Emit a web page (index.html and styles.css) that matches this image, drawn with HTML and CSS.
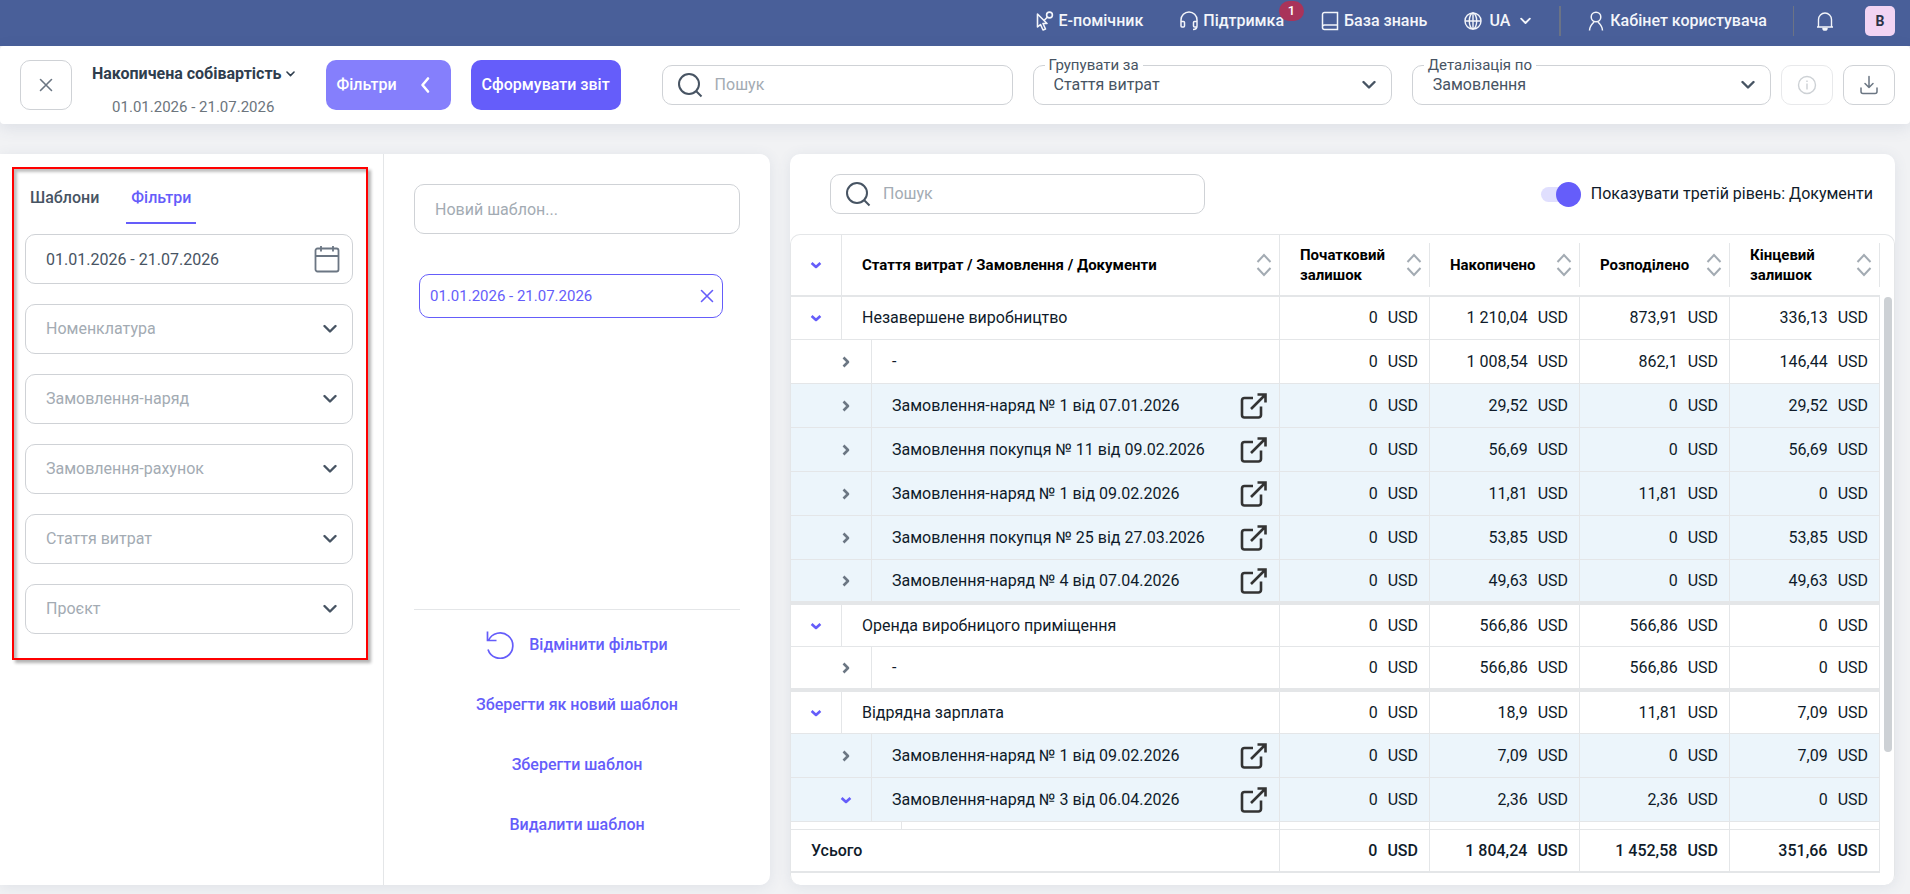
FILE: index.html
```html
<!DOCTYPE html>
<html lang="uk">
<head>
  <meta charset="UTF-8" />
  <meta name="viewport" content="width=device-width, initial-scale=1.0" />
  <title>Накопичена собівартість</title>
  <link rel="stylesheet" href="styles.css">
</head>
<body>
  <svg class="sprite" aria-hidden="true">
    <symbol id="chevron" viewBox="0 0 14 9"><path d="M1.5 1.5 7 7l5.500-5.500" fill="none" stroke="currentColor" stroke-width="2.400" stroke-linecap="round" stroke-linejoin="round"/></symbol>
    <symbol id="down" viewBox="0 0 12 12"><path d="M1.600 4 6 8l4.400-4" fill="none" stroke="currentColor" stroke-width="2.600" stroke-linejoin="round"/></symbol>
    <symbol id="right" viewBox="0 0 12 12"><path d="M3.500 1.500 8 6l-4.500 4.500" fill="none" stroke="currentColor" stroke-width="2.600" stroke-linejoin="round"/></symbol>
    <symbol id="close" viewBox="0 0 14 14"><path d="M1.500 1.500l11 11M12.500 1.500l-11 11" fill="none" stroke="currentColor" stroke-width="1.600" stroke-linecap="round"/></symbol>
    <symbol id="sort" viewBox="0 0 16 24"><path d="M1.500 9 8 2l6.500 7M1.500 15 8 22l6.500-7" fill="none" stroke="currentColor" stroke-width="2"/></symbol>
    <symbol id="search" viewBox="0 0 26 26"><circle cx="12" cy="12" r="10" fill="none" stroke="currentColor" stroke-width="2"/><path d="M19 19l5.500 5.500" stroke="currentColor" stroke-width="2"/></symbol>
    <symbol id="open" viewBox="0 0 28 28"><path d="M13 6H4.500A2.500 2.500 0 0 0 2 8.500v14.500A2.500 2.500 0 0 0 4.500 25.500h14A2.500 2.500 0 0 0 21 23v-8.500M17.500 2.500h8v8M25 3 11 17" fill="none" stroke="currentColor" stroke-width="2.600"/></symbol>
  </svg>

  <header class="topbar">
    <a href="#" class="top-link">
      <svg width="20" height="20" viewBox="0 0 20 20" fill="none" stroke="currentColor" stroke-width="1.600" stroke-linejoin="round"><path d="M2.500 3v13l3-2.500 2.500 5.500 2.500-1-2.500-5.500h4z"/><circle cx="14.500" cy="4" r="2.900"/><path d="M9 9.500 12.500 6"/></svg>
      Е-помічник
    </a>
    <a href="#" class="top-link">
      <svg width="20" height="20" viewBox="0 0 20 20" fill="none" stroke="currentColor" stroke-width="1.500"><path d="M2 15V9a8 8 0 0 1 16 0v6c0 2.500-1.500 3.500-4 3.500M2 10.500h2.500a1 1 0 0 1 1 1V15a1 1 0 0 1-1 1H3a1 1 0 0 1-1-1M18 10.500h-2.500a1 1 0 0 0-1 1V15a1 1 0 0 0 1 1H18"/></svg>
      Підтримка
      <span class="badge">1</span>
    </a>
    <a href="#" class="top-link">
      <svg width="20" height="20" viewBox="0 0 20 20" fill="none" stroke="currentColor" stroke-width="1.500"><path d="M2.500 17V3.500a2 2 0 0 1 2-2h13V14h-13a2 2 0 0 0-2 2.500 2 2 0 0 0 2 2h13V14"/></svg>
      База знань
    </a>
    <button class="top-link lang">
      <svg width="20" height="20" viewBox="0 0 20 20" fill="none" stroke="currentColor" stroke-width="1.400"><circle cx="10" cy="10" r="8"/><ellipse cx="10" cy="10" rx="3.700" ry="8"/><path d="M10 2v16M2 10h16"/></svg>
      UA
      <svg class="lang-arrow" width="11" height="8"><use href="#chevron"/></svg>
    </button>
    <div class="top-divider wide"></div>
    <a href="#" class="top-link">
      <svg width="20" height="20" viewBox="0 0 20 20" fill="none" stroke="currentColor" stroke-width="1.500"><circle cx="10" cy="6" r="4.800"/><path d="M3.500 19.500c0-4 2.500-6.500 4.500-8.500M16.500 19.500c0-4-2.500-6.500-4.500-8.500"/></svg>
      Кабінет користувача
    </a>
    <div class="top-divider"></div>
    <button class="bell" aria-label="Сповіщення">
      <svg width="20" height="20" viewBox="0 0 20 20" fill="none" stroke="currentColor" stroke-width="1.400"><path d="M2 16h16M3.500 16V8.500a6.500 6.500 0 0 1 13 0V16"/><path d="M8 17.500a2 1.600 0 0 0 4 0z" fill="currentColor"/></svg>
    </button>
    <button class="avatar">В</button>
  </header>

  <div class="toolbar">
    <button class="icon-btn tall" aria-label="Закрити"><svg width="14" height="14"><use href="#close"/></svg></button>
    <div class="report-title">
      <button class="report-name">Накопичена собівартість <svg width="9" height="6"><use href="#chevron"/></svg></button>
      <span class="report-date">01.01.2026 - 21.07.2026</span>
    </div>
    <button class="btn btn-light">Фільтри
      <svg width="10" height="18" viewBox="0 0 10 18"><path d="M8 2.500 2.500 9 8 15.500" fill="none" stroke="currentColor" stroke-width="2.600" stroke-linecap="round" stroke-linejoin="round"/></svg>
    </button>
    <button class="btn">Сформувати звіт</button>
    <div class="fields">
      <label class="search top-search">
        <svg width="26" height="26"><use href="#search"/></svg>
        <input type="text" placeholder="Пошук" aria-label="Пошук">
      </label>
      <div class="float-select">
        <label for="groupBy">Групувати за</label>
        <select id="groupBy"><option>Стаття витрат</option></select>
        <svg width="14" height="9"><use href="#chevron"/></svg>
      </div>
      <div class="float-select">
        <label for="detailBy">Деталізація по</label>
        <select id="detailBy"><option>Замовлення</option></select>
        <svg width="14" height="9"><use href="#chevron"/></svg>
      </div>
    </div>
    <div class="tool-icons">
      <button class="icon-btn" disabled aria-label="Інформація">
        <svg width="20" height="20" viewBox="0 0 20 20" fill="none" stroke="currentColor" stroke-width="1.400"><circle cx="10" cy="10" r="8.500"/><path d="M10 8.500v6M10 5.500v1.500"/></svg>
      </button>
      <button class="icon-btn" aria-label="Завантажити">
        <svg width="20" height="20" viewBox="0 0 20 20" fill="none" stroke="currentColor" stroke-width="1.500" stroke-linecap="round" stroke-linejoin="round"><path d="M10 1.500v11M6 8.500l4 4 4-4M2 13v3.500a2 2 0 0 0 2 2h12a2 2 0 0 0 2-2V13"/></svg>
      </button>
    </div>
  </div>

  <main class="main">
    <aside class="side">
      <div class="side-filters">
        <section class="filter-box">
          <div class="tabs">
            <button class="tab">Шаблони</button>
            <button class="tab active">Фільтри</button>
          </div>
          <div class="filter-list">
            <label class="field">
              <input type="text" class="date-input" value="01.01.2026 - 21.07.2026" aria-label="Період">
              <svg class="calendar" width="26" height="28" viewBox="0 0 26 28" fill="none" stroke="currentColor" stroke-width="1.800"><rect x="1.500" y="3.500" width="23" height="23" rx="2"/><path d="M1.500 11h23M7 1v5.500M19 1v5.500"/></svg>
            </label>
            <div class="field"><select aria-label="Номенклатура"><option>Номенклатура</option></select><svg width="14" height="9"><use href="#chevron"/></svg></div>
            <div class="field"><select aria-label="Замовлення-наряд"><option>Замовлення-наряд</option></select><svg width="14" height="9"><use href="#chevron"/></svg></div>
            <div class="field"><select aria-label="Замовлення-рахунок"><option>Замовлення-рахунок</option></select><svg width="14" height="9"><use href="#chevron"/></svg></div>
            <div class="field"><select aria-label="Стаття витрат"><option>Стаття витрат</option></select><svg width="14" height="9"><use href="#chevron"/></svg></div>
            <div class="field"><select aria-label="Проєкт"><option>Проєкт</option></select><svg width="14" height="9"><use href="#chevron"/></svg></div>
          </div>
        </section>
      </div>
      <div class="side-template">
        <input type="text" class="template-name" placeholder="Новий шаблон..." aria-label="Новий шаблон">
        <div class="chip">
          <span>01.01.2026 - 21.07.2026</span>
          <button aria-label="Прибрати"><svg width="14" height="14"><use href="#close"/></svg></button>
        </div>
        <div class="template-actions">
          <button class="reset">
            <svg width="28" height="28" viewBox="0 0 28 28" fill="none" stroke="currentColor" stroke-width="1.700"><path d="M2 18.500A12.700 12.700 0 1 0 2.500 9.500M1.500 .5v9h9"/></svg>
            Відмінити фільтри
          </button>
          <button>Зберегти як новий шаблон</button>
          <button>Зберегти шаблон</button>
          <button>Видалити шаблон</button>
        </div>
      </div>
    </aside>

    <section class="report">
      <div class="report-head">
        <label class="search">
          <svg width="26" height="26"><use href="#search"/></svg>
          <input type="text" placeholder="Пошук" aria-label="Пошук у звіті">
        </label>
        <label class="switch"><input type="checkbox" checked>Показувати третій рівень: Документи</label>
      </div>
      <div class="table-wrap">
        <div class="table-scroll">
          <table>
            <colgroup><col><col class="num-col"><col class="num-col"><col class="num-col"><col class="num-col"></colgroup>
            <thead>
              <tr>
                <th><div class="th name"><span class="toggle"><button class="down" aria-label="Згорнути все"><svg width="12" height="12"><use href="#down"/></svg></button></span><span class="name-text">Стаття витрат / Замовлення / Документи</span><svg class="sort" width="16" height="24"><use href="#sort"/></svg></div></th>
                <th><div class="th">Початковий залишок<svg class="sort" width="16" height="24"><use href="#sort"/></svg></div></th>
                <th><div class="th">Накопичено<svg class="sort" width="16" height="24"><use href="#sort"/></svg></div></th>
                <th><div class="th">Розподілено<svg class="sort" width="16" height="24"><use href="#sort"/></svg></div></th>
                <th><div class="th">Кінцевий залишок<svg class="sort" width="16" height="24"><use href="#sort"/></svg></div></th>
              </tr>
            </thead>
            <tbody>
              <tr class="group">
                <td><div class="name"><span class="toggle"><button class="down" aria-label="Згорнути"><svg width="12" height="12"><use href="#down"/></svg></button></span><span class="name-text">Незавершене виробництво</span></div></td>
                <td>0<span>USD</span></td><td>1 210,04<span>USD</span></td><td>873,91<span>USD</span></td><td>336,13<span>USD</span></td>
              </tr>
              <tr class="sub">
                <td><div class="name"><span class="toggle"><button aria-label="Розгорнути"><svg width="12" height="12"><use href="#right"/></svg></button></span><span class="name-text">-</span></div></td>
                <td>0<span>USD</span></td><td>1 008,54<span>USD</span></td><td>862,1<span>USD</span></td><td>146,44<span>USD</span></td>
              </tr>
              <tr class="sub order">
                <td><div class="name"><span class="toggle"><button aria-label="Розгорнути"><svg width="12" height="12"><use href="#right"/></svg></button></span><span class="name-text">Замовлення-наряд № 1 від 07.01.2026</span><a href="#" aria-label="Відкрити"><svg width="28" height="28"><use href="#open"/></svg></a></div></td>
                <td>0<span>USD</span></td><td>29,52<span>USD</span></td><td>0<span>USD</span></td><td>29,52<span>USD</span></td>
              </tr>
              <tr class="sub order">
                <td><div class="name"><span class="toggle"><button aria-label="Розгорнути"><svg width="12" height="12"><use href="#right"/></svg></button></span><span class="name-text">Замовлення покупця № 11 від 09.02.2026</span><a href="#" aria-label="Відкрити"><svg width="28" height="28"><use href="#open"/></svg></a></div></td>
                <td>0<span>USD</span></td><td>56,69<span>USD</span></td><td>0<span>USD</span></td><td>56,69<span>USD</span></td>
              </tr>
              <tr class="sub order">
                <td><div class="name"><span class="toggle"><button aria-label="Розгорнути"><svg width="12" height="12"><use href="#right"/></svg></button></span><span class="name-text">Замовлення-наряд № 1 від 09.02.2026</span><a href="#" aria-label="Відкрити"><svg width="28" height="28"><use href="#open"/></svg></a></div></td>
                <td>0<span>USD</span></td><td>11,81<span>USD</span></td><td>11,81<span>USD</span></td><td>0<span>USD</span></td>
              </tr>
              <tr class="sub order">
                <td><div class="name"><span class="toggle"><button aria-label="Розгорнути"><svg width="12" height="12"><use href="#right"/></svg></button></span><span class="name-text">Замовлення покупця № 25 від 27.03.2026</span><a href="#" aria-label="Відкрити"><svg width="28" height="28"><use href="#open"/></svg></a></div></td>
                <td>0<span>USD</span></td><td>53,85<span>USD</span></td><td>0<span>USD</span></td><td>53,85<span>USD</span></td>
              </tr>
              <tr class="sub order last">
                <td><div class="name"><span class="toggle"><button aria-label="Розгорнути"><svg width="12" height="12"><use href="#right"/></svg></button></span><span class="name-text">Замовлення-наряд № 4 від 07.04.2026</span><a href="#" aria-label="Відкрити"><svg width="28" height="28"><use href="#open"/></svg></a></div></td>
                <td>0<span>USD</span></td><td>49,63<span>USD</span></td><td>0<span>USD</span></td><td>49,63<span>USD</span></td>
              </tr>
              <tr class="group">
                <td><div class="name"><span class="toggle"><button class="down" aria-label="Згорнути"><svg width="12" height="12"><use href="#down"/></svg></button></span><span class="name-text">Оренда виробницого приміщення</span></div></td>
                <td>0<span>USD</span></td><td>566,86<span>USD</span></td><td>566,86<span>USD</span></td><td>0<span>USD</span></td>
              </tr>
              <tr class="sub last">
                <td><div class="name"><span class="toggle"><button aria-label="Розгорнути"><svg width="12" height="12"><use href="#right"/></svg></button></span><span class="name-text">-</span></div></td>
                <td>0<span>USD</span></td><td>566,86<span>USD</span></td><td>566,86<span>USD</span></td><td>0<span>USD</span></td>
              </tr>
              <tr class="group">
                <td><div class="name"><span class="toggle"><button class="down" aria-label="Згорнути"><svg width="12" height="12"><use href="#down"/></svg></button></span><span class="name-text">Відрядна зарплата</span></div></td>
                <td>0<span>USD</span></td><td>18,9<span>USD</span></td><td>11,81<span>USD</span></td><td>7,09<span>USD</span></td>
              </tr>
              <tr class="sub order">
                <td><div class="name"><span class="toggle"><button aria-label="Розгорнути"><svg width="12" height="12"><use href="#right"/></svg></button></span><span class="name-text">Замовлення-наряд № 1 від 09.02.2026</span><a href="#" aria-label="Відкрити"><svg width="28" height="28"><use href="#open"/></svg></a></div></td>
                <td>0<span>USD</span></td><td>7,09<span>USD</span></td><td>0<span>USD</span></td><td>7,09<span>USD</span></td>
              </tr>
              <tr class="sub order">
                <td><div class="name"><span class="toggle"><button class="down" aria-label="Згорнути"><svg width="12" height="12"><use href="#down"/></svg></button></span><span class="name-text">Замовлення-наряд № 3 від 06.04.2026</span><a href="#" aria-label="Відкрити"><svg width="28" height="28"><use href="#open"/></svg></a></div></td>
                <td>0<span>USD</span></td><td>2,36<span>USD</span></td><td>2,36<span>USD</span></td><td>0<span>USD</span></td>
              </tr>
              <tr class="doc">
                <td><div class="name"><span class="toggle"></span></div></td>
                <td></td><td></td><td></td><td></td>
              </tr>
            </tbody>
            <tfoot>
              <tr>
                <td>Усього</td>
                <td>0<span>USD</span></td><td>1 804,24<span>USD</span></td><td>1 452,58<span>USD</span></td><td>351,66<span>USD</span></td>
              </tr>
            </tfoot>
          </table>
        </div>
        <div class="scrollbar"><div class="thumb"></div></div>
      </div>
    </section>
  </main>
</body>
</html>
```
FILE: styles.css
```css
* {
  box-sizing: border-box;
}

body {
  margin: 0;
  height: 100vh;
  min-height: 640px;
  display: flex;
  flex-direction: column;
  font-family: Roboto, "Liberation Sans", sans-serif;
  font-size: 16px;
  line-height: 20px;
  color: #0f1b2a;
  background: #f1f2f4;
  overflow: hidden;
}

button, input, select {
  font: inherit;
  color: inherit;
}

button {
  padding: 0;
  border: none;
  background: none;
  cursor: pointer;
}

a {
  color: inherit;
  text-decoration: none;
}

svg {
  flex-shrink: 0;
  display: block;
}

.sprite {
  position: absolute;
  width: 0;
  height: 0;
}

/* top bar */
.topbar {
  display: flex;
  justify-content: flex-end;
  align-items: center;
  padding: 6px 15px 10px;
  background: #495f99;
  color: #f3f5fa;
  font-weight: 500;
}

.top-link {
  position: relative;
  display: flex;
  align-items: center;
  gap: 4px;
  margin-right: 36px;
}

.badge {
  position: absolute;
  top: -10px;
  right: -20px;
  width: 25px;
  height: 20px;
  border-radius: 10px;
  background: #a9335a;
  color: #fff;
  font-size: 13px;
  text-align: center;
}

.lang {
  margin-right: 28px;
  gap: 6px;
}

.lang-arrow {
  margin-left: 4px;
}

.top-divider {
  width: 1px;
  height: 30px;
  margin-right: 21px;
  background: #6b7385;
}

.top-divider.wide {
  width: 2px;
  margin-right: 25px;
}

.top-divider + .top-link {
  margin-right: 26px;
}

.bell {
  margin-right: 30px;
}

.avatar {
  width: 30px;
  height: 30px;
  border-radius: 5px;
  background: #f2d4f3;
  color: #2c3447;
  font-size: 14px;
  font-weight: 700;
}

/* toolbar */
.toolbar {
  display: flex;
  align-items: center;
  gap: 20px;
  padding: 7px 15px 7px 20px;
  background: #fff;
  border-radius: 4px;
  box-shadow: 0 4px 16px rgba(70, 90, 130, 0.12);
}

.icon-btn {
  display: flex;
  align-items: center;
  justify-content: center;
  width: 52px;
  height: 40px;
  border: 1px solid #cfd2d6;
  border-radius: 10px;
  color: #6b7683;
}

.icon-btn.tall {
  height: 50px;
}

.icon-btn:disabled {
  border-color: #e8e9eb;
  color: #cdd1d5;
}

.report-title {
  display: flex;
  flex-direction: column;
  align-items: center;
  gap: 13px;
  margin-right: 11px;
  padding-top: 11px;
}

.report-name {
  display: flex;
  align-items: center;
  gap: 4px;
  font-weight: 700;
  color: #2f3e4e;
}

.report-date {
  font-size: 15px;
  color: #6c757d;
}

.btn {
  display: flex;
  align-items: center;
  gap: 23px;
  height: 50px;
  padding: 0 11px;
  border-radius: 10px;
  background: #655dfa;
  color: #fff;
  font-weight: 500;
  white-space: nowrap;
}

.btn-light {
  padding-right: 21px;
  background: #857ffc;
}

.fields {
  display: flex;
  flex: 1;
  gap: 20px;
  margin-left: 21px;
}

.search {
  display: flex;
  align-items: center;
  gap: 12px;
  width: 375px;
  height: 40px;
  padding: 0 14px;
  border: 1px solid #cfd2d6;
  border-radius: 10px;
  color: #475463;
}

.top-search {
  width: 351px;
}

.search input {
  flex: 1;
  min-width: 0;
  padding: 0;
  border: none;
  outline: none;
  background: none;
}

::placeholder {
  color: #a3abb3;
  opacity: 1;
}

.float-select {
  position: relative;
  flex: 1;
  color: #475463;
}

.float-select label {
  position: absolute;
  top: -10px;
  left: 12px;
  padding: 0 4px;
  background: #fff;
  font-size: 15px;
}

select {
  width: 100%;
  appearance: none;
  border: 1px solid #cfd2d6;
  border-radius: 10px;
  background: transparent;
  outline: none;
}

.float-select select {
  height: 40px;
  padding: 0 20px;
}

.float-select svg, .field svg {
  position: absolute;
  top: 50%;
  right: 16px;
  transform: translateY(-50%);
  color: #475463;
  pointer-events: none;
}

.tool-icons {
  display: flex;
  gap: 10px;
  margin-left: -10px;
}

/* main area */
.main {
  flex: 1;
  min-height: 0;
  display: flex;
  gap: 20px;
  padding: 30px 15px 9px 0;
}

.side, .report {
  background: #fff;
  box-shadow: 0 2px 14px rgba(70, 90, 130, 0.1);
}

.side {
  display: flex;
  width: 770px;
  border-radius: 0 10px 10px 0;
}

.side-filters {
  width: 384px;
  padding: 13px 15px 0 12px;
  border-right: 1px solid #e4e6e8;
}

.filter-box {
  padding: 11px 13px 24px 11px;
  border: 2px solid #f00;
  box-shadow: 3px 3px 3px rgba(0, 0, 0, 0.3), inset 3px 3px 3px rgba(0, 0, 0, 0.25);
}

.tabs {
  display: flex;
  gap: 22px;
}

.tab {
  height: 44px;
  padding: 0 5px 7px;
  border-bottom: 2px solid transparent;
  font-weight: 500;
  color: #475463;
}

.tab.active {
  color: #655dfa;
  border-color: #655dfa;
}

.filter-list {
  display: flex;
  flex-direction: column;
  gap: 20px;
  padding-top: 10px;
}

.field {
  position: relative;
}

.field select, .date-input, .template-name {
  display: block;
  width: 100%;
  height: 50px;
  padding: 0 20px;
  border: 1px solid #cfd2d6;
  border-radius: 10px;
  background: transparent;
  outline: none;
}

.field select {
  color: #a3abb3;
}

.date-input {
  color: #475463;
}

.field .calendar {
  right: 13px;
  color: #6b7683;
}

.side-template {
  flex: 1;
  display: flex;
  flex-direction: column;
  padding: 30px 30px 40px;
}

.chip {
  display: flex;
  align-items: center;
  justify-content: space-between;
  height: 44px;
  margin: 40px 17px 0 5px;
  padding: 0 8px 0 10px;
  border: 1px solid #655dfa;
  border-radius: 10px;
  color: #655dfa;
  font-size: 15px;
}

.template-actions {
  display: flex;
  flex-direction: column;
  align-items: center;
  gap: 20px;
  margin-top: auto;
  padding-top: 15px;
  border-top: 1px solid #e4e6e8;
}

.template-actions button {
  display: flex;
  align-items: center;
  gap: 15px;
  height: 40px;
  color: #655dfa;
  font-weight: 500;
}

/* report table */
.report {
  flex: 1;
  min-width: 0;
  display: flex;
  flex-direction: column;
  border-radius: 10px;
}

.report-head {
  display: flex;
  align-items: center;
  justify-content: space-between;
  padding: 20px 22px 20px 40px;
}

.switch {
  display: flex;
  align-items: center;
  gap: 10px;
}

.switch input {
  appearance: none;
  display: flex;
  align-items: center;
  justify-content: flex-end;
  width: 40px;
  height: 15px;
  margin: 0;
  border-radius: 8px;
  background: #e0dffe;
}

.switch input::before {
  content: "";
  width: 25px;
  height: 25px;
  border-radius: 50%;
  background: #655dfa;
}

.table-wrap {
  flex: 1;
  min-height: 0;
  display: flex;
  padding-bottom: 12px;
  border: 1px solid #e4e6e8;
  border-bottom: none;
  border-radius: 10px;
}

.table-scroll {
  flex: 1;
  overflow: hidden;
}

table {
  width: 100%;
  table-layout: fixed;
  border-collapse: separate;
  border-spacing: 0;
}

.num-col {
  width: 150px;
}

th, td {
  padding: 0;
}

th {
  height: 62px;
  border-bottom: 2px solid #e4e6e8;
  font-size: 15px;
  font-weight: 700;
  text-align: left;
  color: #000;
}

.th {
  display: flex;
  align-items: center;
  justify-content: space-between;
  height: 44px;
  padding: 0 7px 0 20px;
  border-right: 1px solid #e4e6e8;
}

.th.name {
  padding-left: 0;
}

.sort {
  color: #a3abb3;
}

td {
  height: 44px;
  padding-right: 11px;
  border-right: 1px solid #e4e6e8;
  border-bottom: 1px solid #e4e6e8;
  text-align: right;
  white-space: nowrap;
}

td > span {
  margin-left: 10px;
}

td:first-child {
  text-align: left;
}

.name {
  display: flex;
  align-items: center;
  height: 100%;
}

td .name {
  height: 43px;
}

.name-text {
  flex: 1;
  padding-left: 20px;
}

.toggle {
  display: flex;
  align-items: center;
  justify-content: flex-end;
  align-self: stretch;
  width: 51px;
  padding-right: 19px;
  border-right: 1px solid #e4e6e8;
  color: #6b7683;
}

.down {
  color: #655dfa;
}

.group td {
  height: 42px;
}

.group .name {
  height: 41px;
}

.group:first-child td {
  height: 43px;
}

.group:first-child .name {
  height: 42px;
}

.sub .toggle {
  width: 81px;
}

.doc .toggle {
  width: 111px;
}

.order td {
  background: #ecf5fb;
}

.order a {
  color: #333;
}

.last td {
  height: 45px;
  border-bottom-width: 4px;
}

.last .name {
  height: 41px;
}

tfoot td {
  position: sticky;
  bottom: 0;
  height: 44px;
  border-top: 1px solid #e4e6e8;
  border-bottom-width: 2px;
  background: #fff;
  font-weight: 500;
}

tfoot td:first-child {
  padding-left: 20px;
}

.scrollbar {
  width: 14px;
  padding: 62px 2px 41px 4px;
}

.thumb {
  height: 85%;
  border-radius: 4px;
  background: #cdd1d5;
}
```
